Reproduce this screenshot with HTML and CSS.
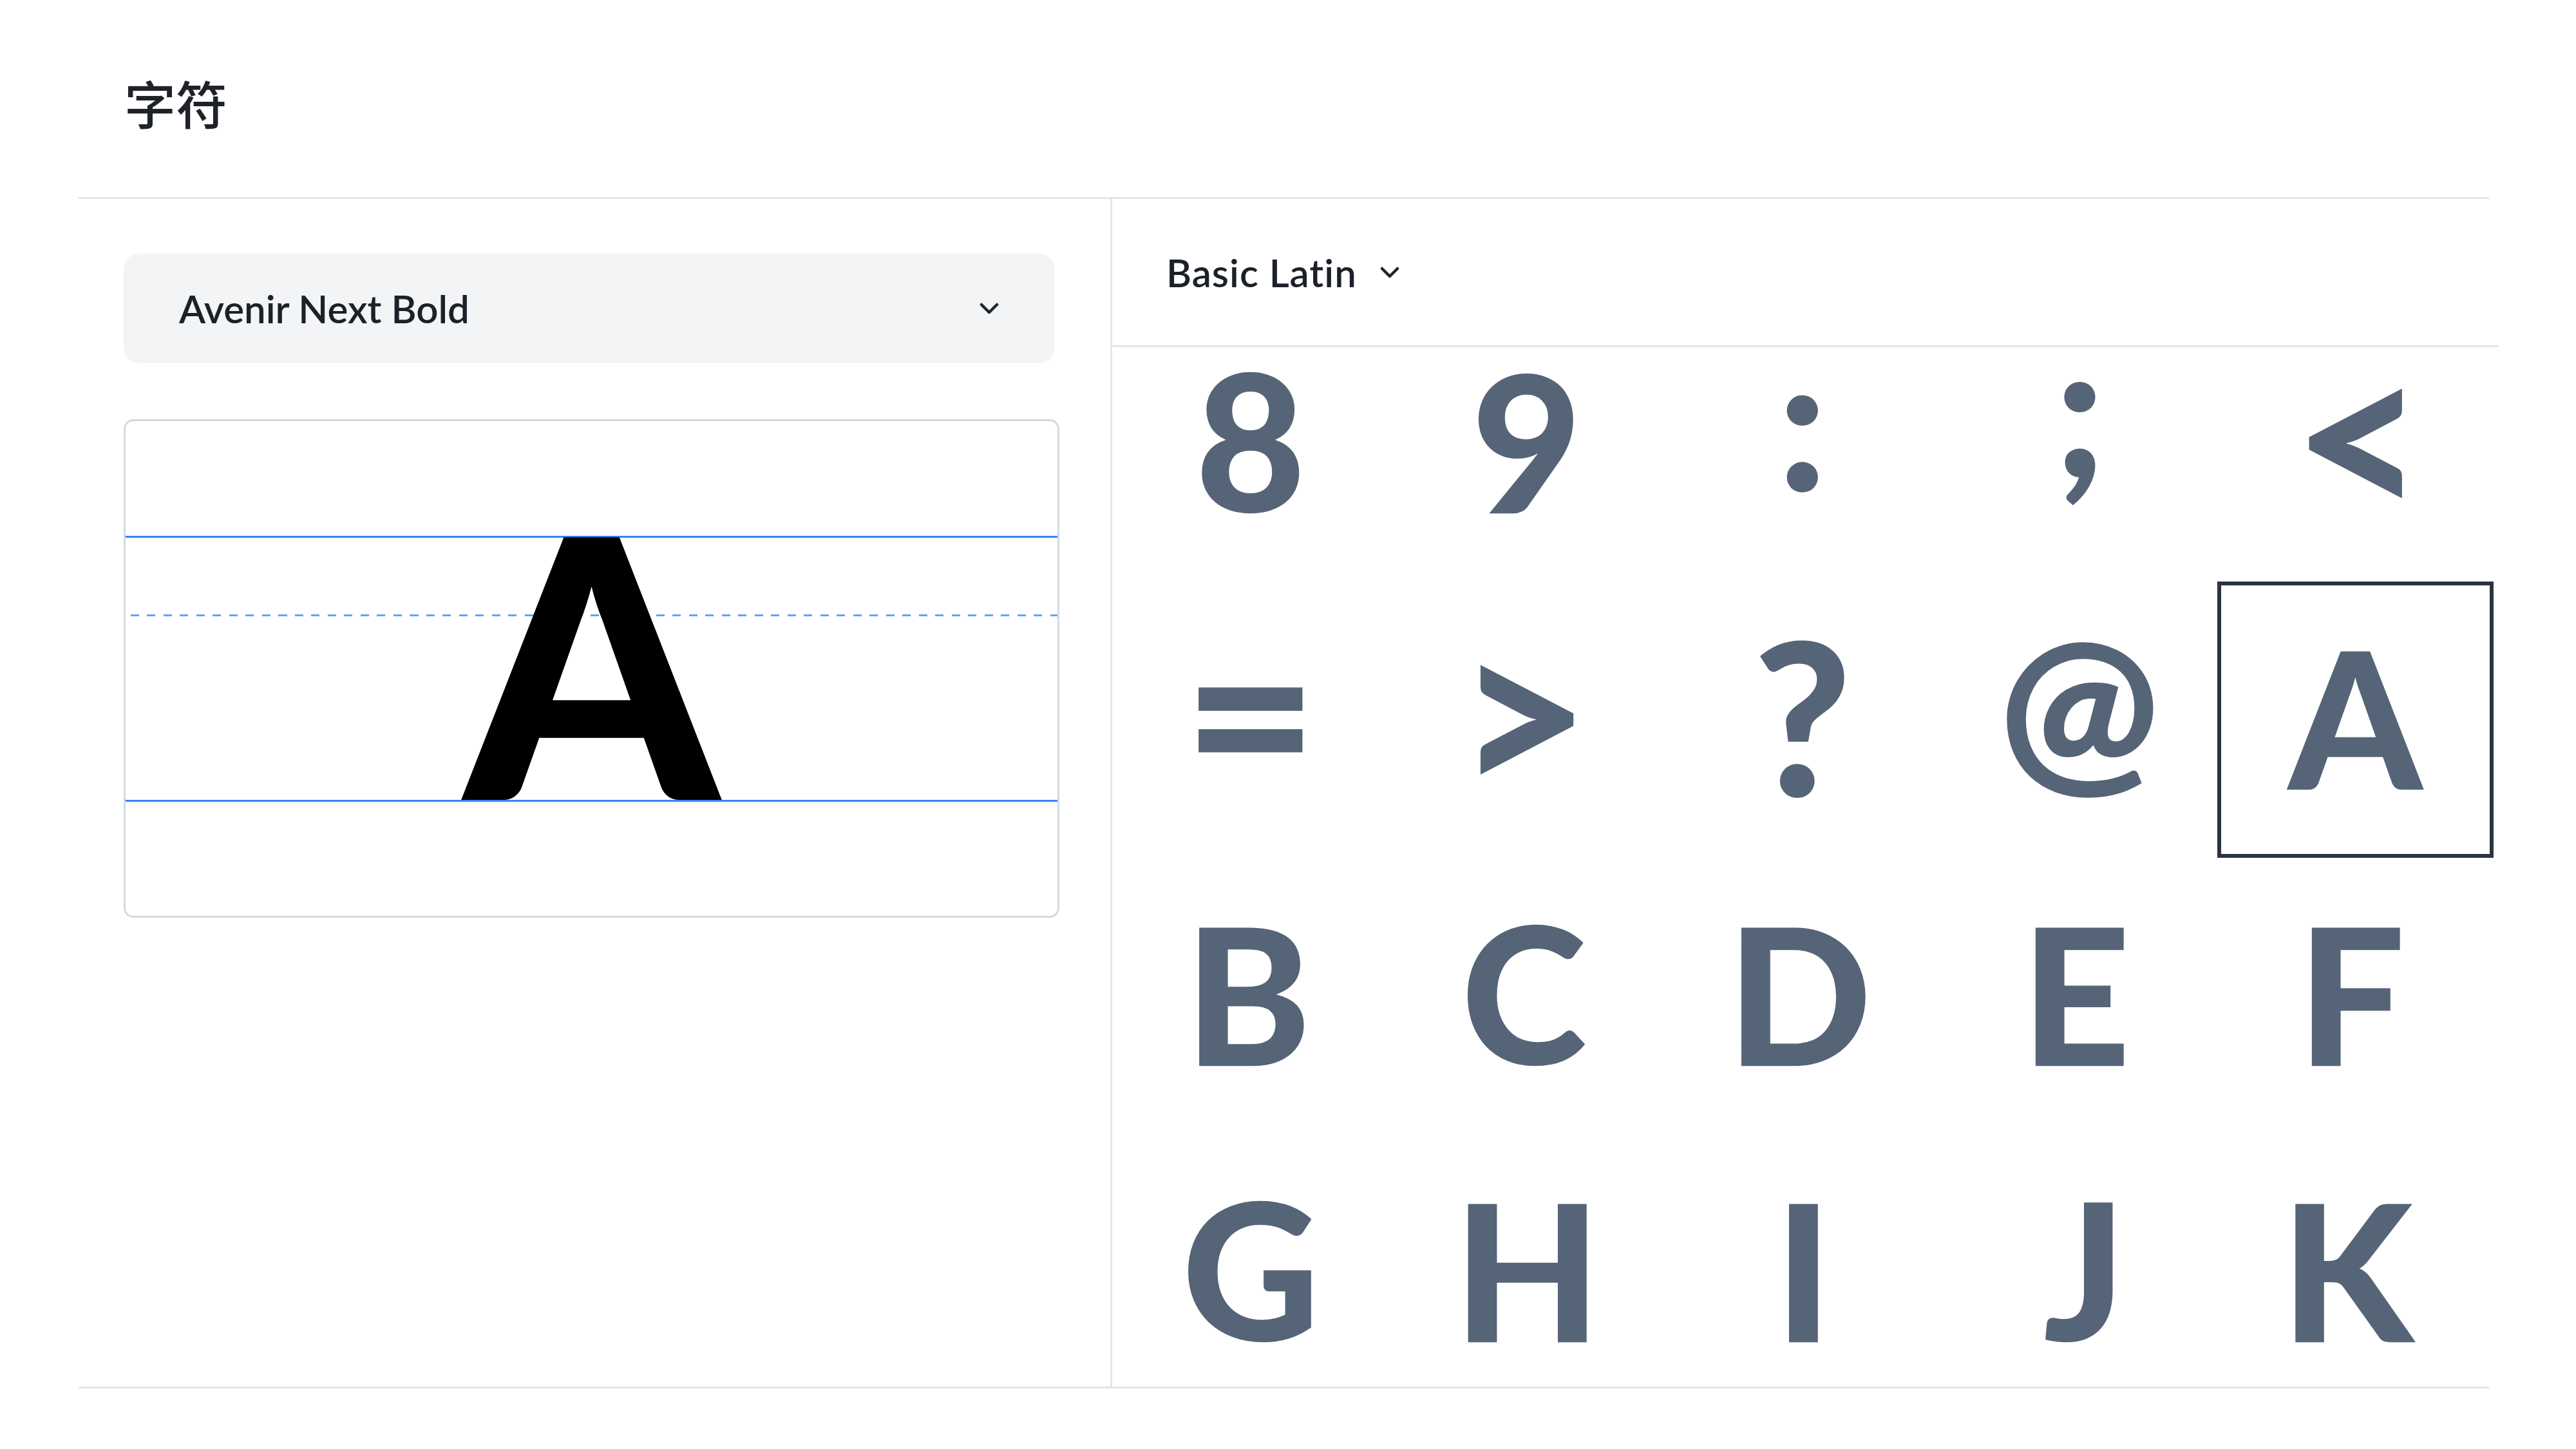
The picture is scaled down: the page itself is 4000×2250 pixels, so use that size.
FILE: index.html
```html
<!DOCTYPE html>
<html lang="zh">
<head>
<meta charset="utf-8">
<title>字符</title>
<link rel="stylesheet" href="styles.css">
</head>
<body>
<div class="page">
  <h1 class="title">字符</h1>
  <div class="panel">
    <aside class="left">
      <div class="select">
        <span class="select-label">Avenir Next Bold</span>
        <svg class="chev" width="32" height="20" viewBox="0 0 32 20"><polyline points="4,4 16,16 28,4" fill="none" stroke="#1f2430" stroke-width="4.5" stroke-linecap="round" stroke-linejoin="round"/></svg>
      </div>
      <div class="preview">
        <div class="guide guide-cap"></div>
        <div class="guide guide-x"></div>
        <div class="guide guide-base"></div>
        <div class="preview-glyph">A</div>
      </div>
    </aside>
    <section class="right">
      <div class="block-head">
        <span class="block-label">Basic Latin</span>
        <svg class="chev" width="32" height="20" viewBox="0 0 32 20"><polyline points="4,4 16,16 28,4" fill="none" stroke="#1f2430" stroke-width="4.5" stroke-linecap="round" stroke-linejoin="round"/></svg>
      </div>
      <div class="grid-scroll">
        <div class="grid">
          <div class="cell"><span class="glyph">8</span></div>
          <div class="cell"><span class="glyph">9</span></div>
          <div class="cell"><span class="glyph">:</span></div>
          <div class="cell"><span class="glyph">;</span></div>
          <div class="cell"><span class="glyph glyph-math">&lt;</span></div>
          <div class="cell"><span class="glyph glyph-math">=</span></div>
          <div class="cell"><span class="glyph glyph-math">&gt;</span></div>
          <div class="cell"><span class="glyph glyph-wide">?</span></div>
          <div class="cell"><span class="glyph">@</span></div>
          <div class="cell selected"><span class="glyph">A</span></div>
          <div class="cell"><span class="glyph">B</span></div>
          <div class="cell"><span class="glyph">C</span></div>
          <div class="cell"><span class="glyph">D</span></div>
          <div class="cell"><span class="glyph">E</span></div>
          <div class="cell"><span class="glyph">F</span></div>
          <div class="cell"><span class="glyph">G</span></div>
          <div class="cell"><span class="glyph">H</span></div>
          <div class="cell"><span class="glyph">I</span></div>
          <div class="cell"><span class="glyph">J</span></div>
          <div class="cell"><span class="glyph">K</span></div>
          <div class="cell"><span class="glyph">L</span></div>
          <div class="cell"><span class="glyph">M</span></div>
          <div class="cell"><span class="glyph">N</span></div>
          <div class="cell"><span class="glyph">O</span></div>
          <div class="cell"><span class="glyph">P</span></div>
        </div>
      </div>
    </section>
  </div>
</div>
<script src="script.js"></script>
</body>
</html>
```

FILE: styles.css
```css
* { box-sizing: border-box; }

body {
  margin: 0;
  background: #ffffff;
  color: #1c2129;
  font-family: Lato, "Noto Sans", sans-serif;
}

.page {
  margin-left: 122px;
  width: 3743px;
}

.title {
  margin: 0;
  padding: 110px 0 100px 71px;
  font-family: "Noto Sans CJK SC", "Noto Sans", sans-serif;
  font-weight: 500;
  font-size: 80px;
  line-height: 96px;
  color: #1f2329;
}

.panel {
  display: flex;
  height: 1850px;
  border-top: 3px solid #e3e6eb;
  border-bottom: 3px solid #e3e6eb;
}

.left {
  flex: none;
  width: 1605px;
  border-right: 3px solid #e3e6eb;
  padding: 85px 0 0 70px;
}

.select {
  width: 1446px;
  height: 170px;
  background: #f3f4f6;
  border-radius: 24px;
  display: flex;
  align-items: center;
  justify-content: space-between;
  padding: 0 86px 0 86px;
}

.select-label {
  font-size: 60px;
  font-weight: 600;
  color: #1c2129;
}

.chev { display: block; flex: none; }

.preview {
  position: relative;
  margin-top: 87px;
  width: 1453px;
  height: 774px;
  border: 3px solid #d5d9df;
  border-radius: 15px;
  padding-top: 90px;
  display: flex;
  justify-content: center;
  align-items: flex-start;
}

.guide {
  position: absolute;
  left: 0;
  right: 0;
  height: 3px;
  background: #3b82f6;
}
.guide-cap { top: 178px; }
.guide-base { top: 588px; }
.guide-x {
  top: 300px;
  left: 8px;
  background: repeating-linear-gradient(90deg, #60a5fa 0 13px, transparent 13px 25.5px);
}

.preview-glyph {
  position: relative;
  font-family: Lato, sans-serif;
  font-weight: 900;
  font-size: 562px;
  line-height: 562px;
  color: #000000;
}

.right {
  flex: none;
  width: 2153px;
  display: flex;
  flex-direction: column;
}

.block-head {
  flex: none;
  height: 230px;
  border-bottom: 3px solid #e3e6eb;
  display: flex;
  align-items: center;
  gap: 35px;
  padding-left: 84px;
}

.block-label {
  font-size: 60px;
  font-weight: 600;
  letter-spacing: 1px;
  color: #1c2129;
}

.grid-scroll {
  flex: 1;
  overflow: hidden;
}

.grid {
  display: grid;
  grid-template-columns: repeat(5, 429px);
  grid-auto-rows: 429px;
}

.cell {
  display: flex;
  align-items: center;
  justify-content: center;
}

.cell.selected {
  border: 6px solid #2c3441;
}

.glyph {
  display: block;
  font-family: Lato, sans-serif;
  font-weight: 900;
  font-size: 296px;
  line-height: 240px;
  color: #566477;
}

.glyph-math { font-size: 360px; }
.glyph-wide { font-size: 330px; }
```

FILE: script.js
```js
(function () {
  var canvas = document.createElement('canvas');
  var ctx = canvas.getContext('2d');
  var glyphs = document.querySelectorAll('.glyph');
  for (var i = 0; i < glyphs.length; i++) {
    var el = glyphs[i];
    var cs = getComputedStyle(el);
    ctx.font = cs.fontWeight + ' ' + cs.fontSize + ' ' + cs.fontFamily;
    var m = ctx.measureText(el.textContent);
    var fA = m.fontBoundingBoxAscent, fD = m.fontBoundingBoxDescent;
    var lh = parseFloat(cs.lineHeight);
    var baseline = (lh - (fA + fD)) / 2 + fA;
    var inkY = baseline - (m.actualBoundingBoxAscent - m.actualBoundingBoxDescent) / 2;
    var inkX = (m.actualBoundingBoxRight - m.actualBoundingBoxLeft) / 2;
    var dx = m.width / 2 - inkX;
    var dy = lh / 2 - inkY;
    el.style.transform = 'translate(' + dx.toFixed(1) + 'px,' + dy.toFixed(1) + 'px)';
  }
  document.querySelector('.grid-scroll').scrollTop = 65;
})();
```
